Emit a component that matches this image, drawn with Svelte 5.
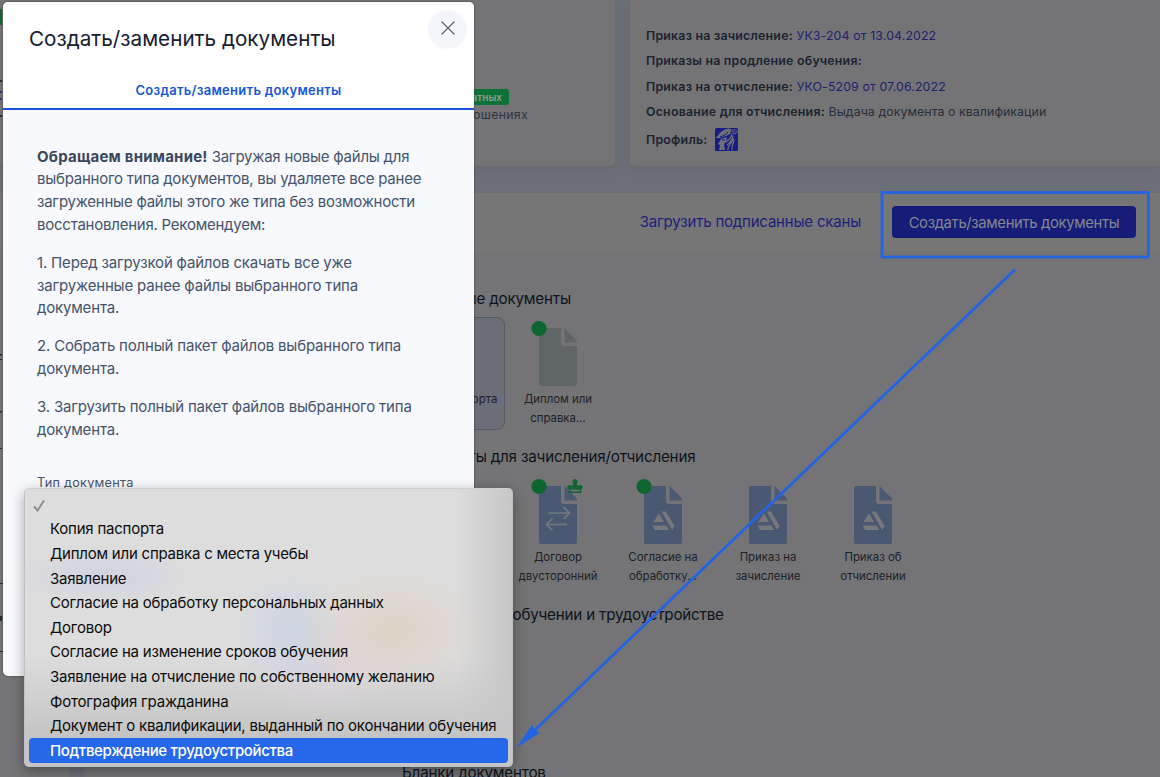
<script>
  const orders = [
    ['Приказ на зачисление:', 'УКЗ-204 от 13.04.2022', true],
    ['Приказы на продление обучения:', '', false],
    ['Приказ на отчисление:', 'УКО-5209 от 07.06.2022', true],
    ['Основание для отчисления:', 'Выдача документа о квалификации', false]
  ];
  const sections = [
    {
      title: 'Первичные документы',
      tiles: [
        { lines: ['Копия паспорта'], kind: 'gray', selected: true },
        { lines: ['Диплом или', 'справка...'], kind: 'gray', dot: true }
      ]
    },
    {
      title: 'Документы для зачисления/отчисления',
      tiles: [
        { lines: ['Заявление'], kind: 'logo' },
        { lines: ['Договор', 'двусторонний'], kind: 'swap', dot: true, stamp: true },
        { lines: ['Согласие на', 'обработку...'], kind: 'logo', dot: true },
        { lines: ['Приказ на', 'зачисление'], kind: 'logo' },
        { lines: ['Приказ об', 'отчислении'], kind: 'logo' }
      ]
    },
    { title: 'Документы об обучении и трудоустройстве', tiles: [] },
    { title: 'Бланки документов', tiles: [] }
  ];
  const options = [
    'Копия паспорта',
    'Диплом или справка с места учебы',
    'Заявление',
    'Согласие на обработку персональных данных',
    'Договор',
    'Согласие на изменение сроков обучения',
    'Заявление на отчисление по собственному желанию',
    'Фотография гражданина',
    'Документ о квалификации, выданный по окончании обучения',
    'Подтверждение трудоустройства'
  ];
  const selected = options.length - 1;
</script>

<div class="page">
  <div class="cards">
    <section class="card first">
      <div class="badge-row"><span class="badge">В трудовых и иных оплатных</span></div>
      <div class="relation">отношениях</div>
    </section>
    <section class="card second">
      {#each orders as [name, value, link]}
        <div class="order"><b>{name}</b> <span class={link ? 'link' : 'value'}>{value}</span></div>
      {/each}
      <div class="order profile">
        <b>Профиль:</b>
        <svg width="23" height="23" viewBox="0 0 23 23">
          <rect width="23" height="23" rx="1.500" fill="#161c84" />
          <path d="M0 10C4 8 5 3 10 1.500Q13 0 16 1l-1 5-4 2-6 2zM6 11l6-2-1 5-2 2 1 6H4l1-5-2-1z" fill="#6d6f78" />
          <g fill="none" stroke="#74747a" stroke-linecap="round">
            <path d="M11 14c3-2 5-4 6-8M12 17c3-2 5-5 6-9M13 22c-1-4 4-6 5-11M17 22c-1-4 2-6 2-11" stroke-width="1.100" />
            <path d="M15 5c1-4 6-4 7-2s-3 4-4 2 1-2 2-1" stroke-width="1" />
          </g>
          <path d="M5 9c3-1 6-2 8-5M7 12h3" stroke="#161c84" stroke-width="1" fill="none" />
        </svg>
      </div>
    </section>
  </div>

  <div class="toolbar">
    <span class="upload">Загрузить подписанные сканы</span>
    <button>Создать/заменить документы</button>
  </div>

  <main>
    {#each sections as s}
      <section class="docs">
        <h3>{s.title}</h3>
        <div class="tiles">
          {#each s.tiles as t}
            <div class="tile" class:selected={t.selected}>
              <svg class="file" width="60" height="70" viewBox="0 0 60 70">
                <path d="M13 12q0-2 2-2h20v15q0 3 3 3h13v38q0 2-2 2H15q-2 0-2-2z" fill={t.kind === 'gray' ? '#606668' : '#4a5872'} />
                <path d="M38.5 10l12.500 12.500v2H38.500z" fill={t.kind === 'gray' ? '#606668' : '#4a5872'} />
                {#if t.kind === 'swap'}
                  <path d="M22.500 37h21M37.500 31l6 6-6 6M41 48.500H20.500M26.500 42.500l-6 6 6 6" fill="none" stroke="#76787c" stroke-width="1.700" />
                {:else if t.kind === 'logo'}
                  <path d="M28 37.500l5 8.500H22.500zM21.500 49.500h14l2.800 4.500H24zM30.500 35.500h4.500l8.500 14.500-2.300 4z" fill="#777879" />
                {/if}
                {#if t.dot}<circle cx="13" cy="10.500" r="7.600" fill="#0d6530" />{/if}
                {#if t.stamp}
                  <path d="M47.600 11l-.8-4a2.600 2.600 0 1 1 4.400 0l-.8 4z" fill="#0d6530" />
                  <path d="M43.500 12.800h11v3.400h-11z" fill="#6f7474" stroke="#0d6530" stroke-width="1.500" />
                  <path d="M43.300 11.300h11.400" stroke="#0d6530" stroke-width="4" stroke-linecap="round" />
                {/if}
              </svg>
              {#each t.lines as line}<span>{line}</span>{/each}
            </div>
          {/each}
        </div>
      </section>
    {/each}
  </main>

  <svg class="edge" width="3" height="777" viewBox="0 0 3 777">
    <path d="M0 9h2v16H0z" fill="#0c6533" />
    <path d="M0 80h2v2H0zM0 115h2v2H0zM0 354h2v1.500H0zM0 359h2v1H0zM0 411h2v1.500H0zM0 448h2v1H0zM0 583h3v1H0zM0 616h2v5H0zM0 651h3v1H0z" fill="#242932" />
    <path d="M0 91h1.500v2H0zM0 98h1.500v2H0z" fill="#20206e" />
  </svg>

  <div class="modal">
    <header>
      <h1>Создать/заменить документы</h1>
      <span class="close">
        <svg width="16" height="16" viewBox="0 0 16 16"><path d="M1.500 1.500l13 13M14.500 1.500l-13 13" stroke="#666" stroke-width="1.300" /></svg>
      </span>
    </header>
    <div class="tab"><span>Создать/заменить документы</span></div>
    <div class="content">
      <p class="lead"><b>Обращаем внимание!</b> Загружая новые файлы для<br />выбранного типа документов, вы удаляете все ранее<br />загруженные файлы этого же типа без возможности<br />восстановления. Рекомендуем:</p>
      <p>1. Перед загрузкой файлов скачать все уже<br />загруженные ранее файлы выбранного типа<br />документа.</p>
      <p>2. Собрать полный пакет файлов выбранного типа<br />документа.</p>
      <p>3. Загрузить полный пакет файлов выбранного типа<br />документа.</p>
      <span class="label">Тип документа</span>
    </div>
  </div>

  <div class="menu">
    <div class="option">
      <svg width="12" height="13" viewBox="0 0 12 13"><path d="M1 7.500l3.500 4L11 1.500" fill="none" stroke="#8b8b8b" stroke-width="1.900" /></svg>
    </div>
    {#each options as o, i}
      <div class="option" class:active={i === selected}><span>{o}</span></div>
    {/each}
  </div>

  <svg class="marks" width="1160" height="777" viewBox="0 0 1160 777">
    <rect x="882" y="192.500" width="266.500" height="64.500" fill="none" stroke="#2464e3" stroke-width="2.800" />
    <path d="M1014 270.500L536 729" stroke="#2464e3" stroke-width="2.900" stroke-linecap="round" />
    <path d="M517.500 746.500l14.500-21 2 3.500 5 4z" fill="#2464e3" stroke="#2464e3" />
  </svg>
</div>

<style>
  :global(body) { margin: 0; }
  .page { position: relative; width: 1160px; height: 777px; overflow: hidden; background: linear-gradient(90deg, #747476 0 69px, #6c6f78 69px 84px, #747476 84px); font-family: Inter, sans-serif; color: #1b2432; }
  .cards { display: flex; gap: 15px; height: 193px; background: #6c6f77; box-sizing: border-box; padding-bottom: 27px; }
  .card { background: #747476; box-sizing: border-box; box-shadow: 0 2px 8px #5f626c66; }
  .first { width: 615px; border-radius: 0 0 5px 5px; padding-top: 89px; display: flex; flex-direction: column; align-items: flex-start; }
  .badge-row { width: 509px; display: flex; justify-content: flex-end; }
  .badge { background: #0c7238; color: #8e9c94; border-radius: 3px; font-size: 10px; font-weight: 600; line-height: 16px; padding: 0 7px; }
  .relation { width: 528px; text-align: right; font-size: 12.400px; line-height: 19px; letter-spacing: .25px; color: #2d333f; }
  .second { flex: 1; border-radius: 0 0 0 5px; padding: 22.600px 0 0 16px; }
  .order { font-size: 12.350px; line-height: 25.600px; white-space: nowrap; color: #262d39; letter-spacing: .22px; }
  .order b { font-weight: 600; color: #1b2330; }
  .order .link { color: #20206e; letter-spacing: .12px; }
  .order .value { letter-spacing: .07px; }
  .profile { display: flex; align-items: center; gap: 8px; padding-top: 2px; }
  .profile svg { margin-top: 0; }
  .toolbar { height: 58px; background: #767676; display: flex; align-items: center; justify-content: flex-end; gap: 31px; padding-right: 24px; }
  .upload { font-size: 15px; letter-spacing: -.19px; color: #1c1f7c; margin-top: -1px; }
  button { width: 244px; height: 32px; border: 0; border-radius: 4px; background: #161d79; color: #85878f; font: 14.800px Inter, sans-serif; letter-spacing: -.33px; padding: 1px 0 0; white-space: nowrap; }
  main { padding: 36px 0 0 401px; }
  .docs { height: 158px; display: flex; flex-direction: column; gap: 6px; }
  h3 { margin: 0 0 0 1px; font-size: 15.200px; line-height: 24px; font-weight: 400; letter-spacing: -.19px; color: #0d131d; white-space: nowrap; }
  .tiles { display: flex; gap: 1px; }
  .tile { width: 104px; height: 113px; box-sizing: border-box; border: 1px solid transparent; border-radius: 8px; display: flex; flex-direction: column; align-items: center; font-size: 11.400px; line-height: 19px; color: #1b212b; }
  .tile.selected { border-color: #525967; background: #6b6e77; }
  .file { display: block; flex: none; margin-left: -4px; margin-bottom: 2px; }
  .edge { position: absolute; left: 0; top: 0; }
  .modal { position: absolute; left: 3px; top: 2px; width: 471px; height: 674px; border-radius: 5px; background: #f8f9fd; overflow: hidden; box-shadow: 0 0 2px #333; }
  header { height: 74px; background: #fff; display: flex; justify-content: space-between; padding: 0 7px 0 26px; }
  h1 { margin: 22px 0 0; font-size: 20.700px; line-height: 30px; font-weight: 400; color: #172032; }
  .close { width: 39px; height: 39px; margin-top: 8px; border-radius: 50%; background: #f5f6fc; display: flex; align-items: center; justify-content: center; }
  .close svg { margin-bottom: 3px; }
  .tab { height: 32px; background: #fff; border-bottom: 2px solid #1c52df; text-align: center; color: #1556dc; font-size: 13px; line-height: 29px; font-weight: 600; letter-spacing: .28px; }
  .content { padding: 35.700px 34px; font-size: 15px; letter-spacing: -.18px; line-height: 22.800px; color: #46546b; white-space: nowrap; }
  .content p { margin: 0 0 15px; }
  .content .lead { letter-spacing: -.235px; }
  .content b { font-weight: 700; color: #3b485c; letter-spacing: .22px; }
  .label { display: block; margin-top: 32px; font-size: 12.700px; line-height: 20px; letter-spacing: .25px; }
  .menu { position: absolute; left: 24px; top: 488px; width: 489px; height: 279px; box-sizing: border-box; padding: 3px 5px; border-radius: 5px; border: 1px solid #bfc0c1; border-top-color: #d0d0d1; box-shadow: 0 4px 14px #0005; background:
    radial-gradient(ellipse 100px 65px at 368px 142px, #ded4c4, #dfd5cc88 50%, transparent),
    radial-gradient(ellipse 60px 60px at 268px 142px, #ccd5e2, transparent),
    radial-gradient(ellipse 80px 50px at 300px 175px, #dcd4dc, transparent),
    radial-gradient(ellipse 95px 32px at 80px 87px, #d2d4de, transparent),
    linear-gradient(90deg, transparent 430px, #c6c6c8 489px),
    linear-gradient(#dddddd 0 165px, #c5c5c6 245px); }
  .option { height: 24.600px; display: flex; align-items: center; padding-left: 20px; font-size: 15px; letter-spacing: -.22px; color: #0c0c0c; white-space: nowrap; }
  .option svg { margin: 2px 0 0 -17px; }
  .option.active { height: 25px; background: #2668ea; color: #fff; font-weight: 500; letter-spacing: -.34px; margin: 0 -1px; padding-left: 21px; border-radius: 4px; }
  .marks { position: absolute; left: 0; top: 0; }
</style>
